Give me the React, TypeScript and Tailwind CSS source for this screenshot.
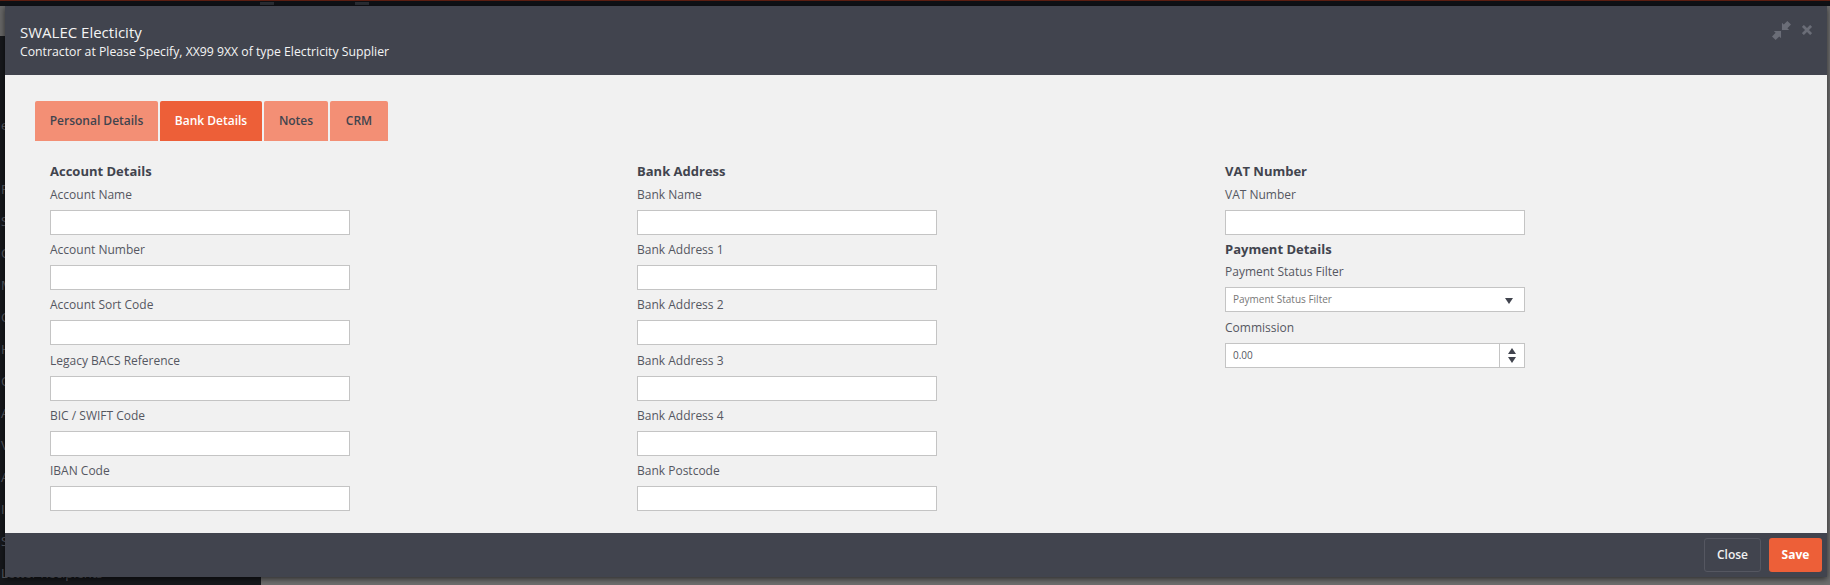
const fields1 = ['Account Name', 'Account Number', 'Account Sort Code', 'Legacy BACS Reference', 'BIC / SWIFT Code', 'IBAN Code']
const fields2 = ['Bank Name', 'Bank Address 1', 'Bank Address 2', 'Bank Address 3', 'Bank Address 4', 'Bank Postcode']

// only the first letter of each menu item shows past the modal
const menu = ['e', '', 'P', 'S', 'C', 'M', 'C', 'H', 'C', 'A', 'V', 'A', 'I', 'S', 'Letter Recipients']

const tabs = [
    { name: 'Personal Details', active: false, width: 'w-[123px]' },
    { name: 'Bank Details', active: true, width: 'w-[102px]' },
    { name: 'Notes', active: false, width: 'w-[64px]' },
    { name: 'CRM', active: false, width: 'w-[58px]' }
]

function Field({ label }: { label: string }) {
    return (
        <div className="h-[55.2px]">
            <label className="block h-[19px] mb-[6px] text-[12px] leading-[19px] text-[#555761]">{label}</label>
            <input className="block w-[300px] h-[25px] bg-white border border-[#c4c4c4] outline-none" />
        </div>
    )
}

function Heading({ children }: { children: string }) {
    return <h4 className="h-[19px] text-[13px] leading-[19px] font-bold text-[#41444e]">{children}</h4>
}

export default function App() {
    return (
        <div className="relative w-[1830px] h-[585px] overflow-hidden bg-[#121418] font-['Open_Sans',sans-serif]">
            {/* page behind the overlay */}
            <div className="h-[1px] bg-[#5c1f12]" />
            <div className="flex h-[5px] pt-[1px] pl-[260px] gap-[81px] bg-[#0f1115]">
                <div className="w-[14px] h-[3px] bg-[#2a2d33]" />
                <div className="w-[14px] h-[3px] bg-[#2a2d33]" />
            </div>
            <div className="flex h-[579px]">
                <div className="w-[261px] bg-[#16181c]">
                    <div className="h-[30px] w-[5px] bg-[#666666]" />
                    <div className="pt-[73px]">
                        {menu.map((item, i) => (
                            <div key={i} className="h-[32px] pl-[1px] text-[13px] leading-[32px] whitespace-nowrap text-[#5a5c62]">{item}</div>
                        ))}
                    </div>
                </div>
                <div className="flex-1 bg-[#6e6e6e] flex flex-col justify-end pl-[421px]">
                    <div className="h-[5px] overflow-hidden text-[13px] leading-[18px] text-[#222222]">Company Name</div>
                </div>
            </div>

            {/* modal */}
            <div className="absolute left-[5px] top-[6px] w-[1822px] h-[571px] flex flex-col shadow-[0_2px_6px_rgba(0,0,0,0.6)]">
                <div className="h-[69px] shrink-0 bg-[#41444e] flex justify-between pl-[15px] pr-[15px]">
                    <div className="text-[#f4f4f4]">
                        <div className="pt-[15px] text-[15px] leading-[22px]">SWALEC Electicity</div>
                        <div className="text-[12.25px] leading-[18px]">Contractor at Please Specify, XX99 9XX of type Electricity Supplier</div>
                    </div>
                    <div className="flex items-start gap-[11px] pt-[15px] text-[#6a6d77]">
                        <svg width="19" height="19" viewBox="0 0 21 21" fill="currentColor">
                            <path d="M17 0l4 4-4 4 2 2h-8V2l2 2z" />
                            <path d="M0 17l4-4-2-2h8v8l-2-2-4 4z" />
                        </svg>
                        <svg width="10" height="10" viewBox="0 0 11 11" className="mt-[4px]" stroke="currentColor" strokeWidth="3" fill="none">
                            <path d="M1 1l9 9M10 1l-9 9" />
                        </svg>
                    </div>
                </div>

                <div className="flex-1 bg-[#f1f1f1] pl-[30px] pt-[26px]">
                    <div className="flex gap-[2px] h-[40px]">
                        {tabs.map(tab => (
                            <div
                                key={tab.name}
                                className={`${tab.width} flex items-center justify-center rounded-t-[2px] text-[12px] font-semibold ${tab.active ? 'bg-[#ed5f38] text-white font-bold' : 'bg-[#f38f75] text-[#41444e]'}`}
                            >
                                {tab.name}
                            </div>
                        ))}
                    </div>
                    <div className="grid grid-cols-[587px_588px_587px] pt-[21px]">
                        <div className="pl-[15px]">
                            <Heading>Account Details</Heading>
                            <div className="pt-[4px]">
                                {fields1.map(f => <Field key={f} label={f} />)}
                            </div>
                        </div>
                        <div className="pl-[15px]">
                            <Heading>Bank Address</Heading>
                            <div className="pt-[4px]">
                                {fields2.map(f => <Field key={f} label={f} />)}
                            </div>
                        </div>
                        <div className="pl-[15px]">
                            <Heading>VAT Number</Heading>
                            <div className="pt-[4px]">
                                <Field label="VAT Number" />
                            </div>
                            <Heading>Payment Details</Heading>
                            <label className="block h-[19px] mt-[3px] mb-[6px] text-[12px] leading-[19px] text-[#555761]">Payment Status Filter</label>
                            <div className="w-[300px] h-[25px] bg-white border border-[#c4c4c4] flex items-center justify-between pl-[7px] pr-[11px] text-[10px] text-[#777777]">
                                <span>Payment Status Filter</span>
                                <svg width="8" height="6" viewBox="0 0 8 6" fill="#41444e" className="mt-[2px]"><path d="M0 0h8L4 6z" /></svg>
                            </div>
                            <label className="block h-[19px] mt-[6px] mb-[6px] text-[12px] leading-[19px] text-[#555761]">Commission</label>
                            <div className="w-[300px] h-[25px] bg-white border border-[#c4c4c4] flex items-center justify-between pl-[7px] text-[10px] text-[#555761]">
                                <span>0.00</span>
                                <div className="w-[25px] h-full border-l border-[#c4c4c4] flex flex-col items-center justify-center gap-[3px]">
                                    <svg width="8" height="6" viewBox="0 0 8 6" fill="#41444e"><path d="M0 6h8L4 0z" /></svg>
                                    <svg width="8" height="6" viewBox="0 0 8 6" fill="#41444e"><path d="M0 0h8L4 6z" /></svg>
                                </div>
                            </div>
                        </div>
                    </div>
                </div>

                <div className="h-[44px] shrink-0 bg-[#41444e] flex items-center justify-end gap-[8px] pr-[5px]">
                    <button className="w-[57px] h-[34px] rounded-[3px] border border-[#555761] text-[12px] font-semibold text-[#f1f1f1]">Close</button>
                    <button className="w-[53px] h-[34px] rounded-[3px] bg-[#ed5f38] text-[12px] font-bold text-white">Save</button>
                </div>
            </div>
        </div>
    )
}
